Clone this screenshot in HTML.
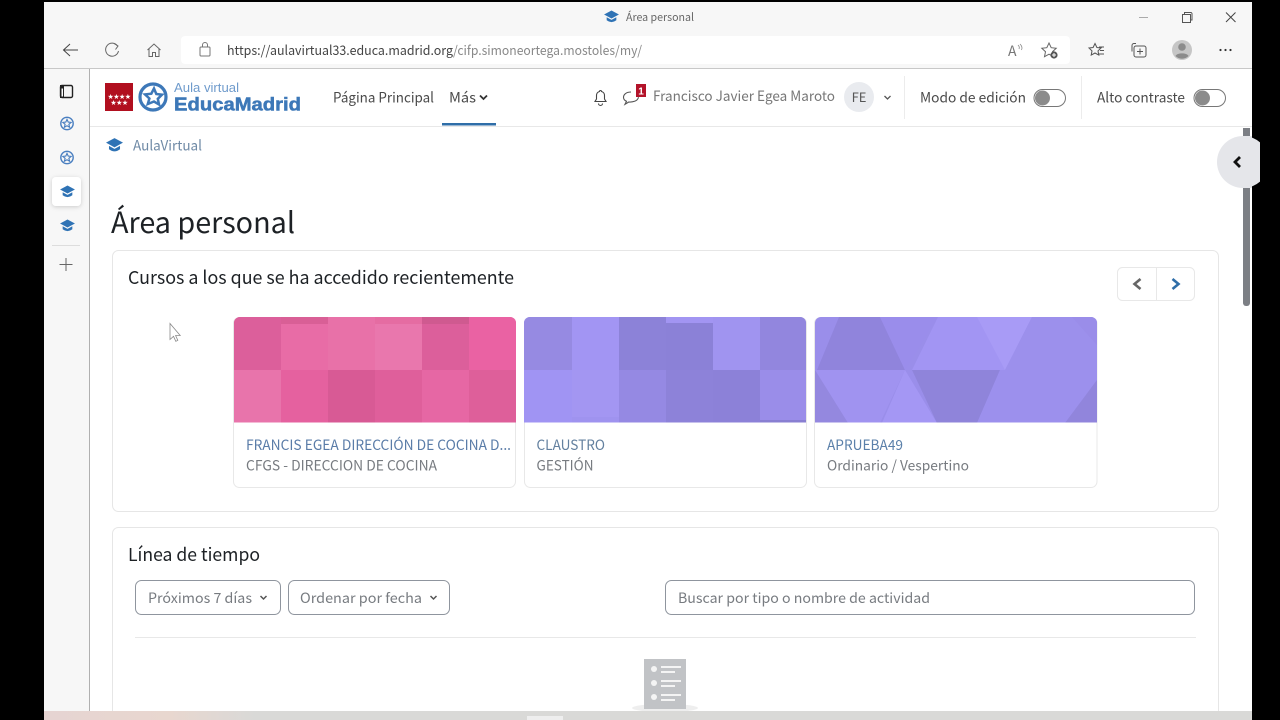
<!DOCTYPE html>
<html lang="es">
<head>
<meta charset="utf-8">
<title>Área personal</title>
<style>
html,body{margin:0;padding:0;width:1280px;height:720px;overflow:hidden;background:#000}
svg{display:block}
text{font-family:"Noto Sans CJK SC","Liberation Sans",sans-serif}
.lib{font-family:"Liberation Sans",sans-serif}
</style>
</head>
<body>
<svg width="1280" height="720" viewBox="0 0 1280 720" xmlns="http://www.w3.org/2000/svg">
<defs>
<symbol id="cap" viewBox="0 0 16 14">
  <path d="M8 .5 L16 4.800 L8 9.200 L0 4.800 Z" fill="#2f73b5"/>
  <path d="M2.800 7.800 L8 10.600 L13.200 7.800 L13.200 11 Q8 15 2.800 11 Z" fill="#2f73b5"/>
</symbol>
<symbol id="star" viewBox="0 0 16 16">
  <circle cx="8" cy="8" r="6.600" fill="none" stroke="#4a7fc0" stroke-width="1.500"/>
  <path d="M8 3.600 L9.300 6.500 L12.400 6.800 L10 8.900 L10.800 12 L8 10.400 L5.200 12 L6 8.900 L3.600 6.800 L6.700 6.500 Z" fill="none" stroke="#4a7fc0" stroke-width="1.200"/>
</symbol>
<filter id="sh" x="-30%" y="-30%" width="160%" height="160%"><feDropShadow dx="0" dy="1" stdDeviation="2" flood-color="#000" flood-opacity=".18"/></filter>
<filter id="shd" x="-30%" y="-30%" width="160%" height="160%"><feMorphology operator="dilate" radius=".25"/></filter>
</defs>

<!-- frame -->
<rect width="1280" height="720" fill="#000"/>
<rect x="44" y="2" width="1208" height="718" fill="#f7f7f7"/>

<!-- title bar -->
<use href="#cap" x="604" y="10" width="15" height="13"/>
<text x="626" y="21" font-size="11" fill="#666" textLength="68" lengthAdjust="spacingAndGlyphs">Área personal</text>
<path d="M1139 17.500h9" stroke="#aaa" stroke-width="1"/>
<path d="M1182.500 14.500h8v8h-8z" fill="none" stroke="#555" stroke-width="1"/>
<path d="M1184.500 14.500v-2h6.500a1.500 1.500 0 0 1 1 1v6.500h-2" fill="none" stroke="#555" stroke-width="1"/>
<path d="M1226 12.500l9.500 9.500M1235.500 12.500l-9.500 9.500" stroke="#444" stroke-width="1"/>

<!-- toolbar -->
<path d="M78 50H64M70 44l-6.500 6 6.500 6" fill="none" stroke="#444" stroke-width="1"/>
<path d="M117.500 46a6.500 6.500 0 1 0 1 5" fill="none" stroke="#666" stroke-width="1"/>
<path d="M114 43.500l4 2.500-2.500 3.500" fill="none" stroke="#666" stroke-width="1"/>
<path d="M147.500 50l6.500-6 6.500 6M149 49v7.500h3.500v-4h3v4h3.500V49" fill="none" stroke="#666" stroke-width="1"/>
<rect x="181" y="36" width="889" height="28" rx="4" fill="#fff"/>
<rect x="200" y="47" width="10" height="9" rx="1" fill="none" stroke="#777" stroke-width="1"/>
<path d="M202.500 47v-2a2.500 2.500 0 0 1 5 0v2" fill="none" stroke="#777" stroke-width="1"/>
<text x="227" y="55" font-size="13" fill="#444" textLength="226" lengthAdjust="spacingAndGlyphs">https://aulavirtual33.educa.madrid.org</text>
<text x="453" y="55" font-size="13" fill="#888" textLength="189" lengthAdjust="spacingAndGlyphs">/cifp.simoneortega.mostoles/my/</text>
<text x="1008" y="56" font-size="14" fill="#777">A</text>
<path d="M1018 45q2 2 1 4M1020 44q3 3 1.500 6" fill="none" stroke="#888" stroke-width=".8"/>
<path d="M1049 43l2.200 4.700 5 .6-3.700 3.400 1 5-4.500-2.500-4.500 2.500 1-5-3.700-3.400 5-.6z" fill="none" stroke="#666" stroke-width="1"/>
<circle cx="1054" cy="55" r="3.600" fill="#555"/>
<path d="M1052 55h4M1054 53v4" stroke="#fff" stroke-width="1"/>
<path d="M1095 43.500l1.900 4 4.100.5-3 2.900.8 4.200-3.800-2.100-3.800 2.100.8-4.200-3-2.900 4.100-.5z" fill="none" stroke="#555" stroke-width="1"/>
<path d="M1099 47h5M1100 50.500h4M1099 54h5" stroke="#555" stroke-width="1"/>
<rect x="1134" y="46" width="12" height="11" rx="2" fill="none" stroke="#555" stroke-width="1"/>
<path d="M1136 43.500h-2a2 2 0 0 0-2 2v6M1140 48.500v6M1137 51.500h6" fill="none" stroke="#555" stroke-width="1"/>
<circle cx="1182" cy="50" r="10" fill="#c6c6c6"/>
<circle cx="1182" cy="47" r="3.800" fill="#8b8b8b"/>
<path d="M1175.500 56c1.500-3.500 11.500-3.500 13 0a9 9 0 0 1-13 0z" fill="#8b8b8b"/>
<circle cx="1220.500" cy="50" r="1.100" fill="#333"/><circle cx="1225.500" cy="50" r="1.100" fill="#333"/><circle cx="1230.500" cy="50" r="1.100" fill="#333"/>
<path d="M44 68.500h1208" stroke="#c8c8c8" stroke-width="1"/>

<!-- side bar -->
<rect x="44" y="69" width="45" height="651" fill="#f7f7f7"/>
<path d="M89.500 69v643" stroke="#b0b0b0" stroke-width="1"/>
<rect x="60.500" y="85.500" width="12" height="12" rx="1.500" fill="none" stroke="#222" stroke-width="1.400"/>
<rect x="60" y="85" width="4" height="13" fill="#222"/>
<rect x="61.500" y="88.500" width="1.500" height="8" fill="#fff"/>
<use href="#star" x="59.500" y="116" width="15" height="15"/>
<use href="#star" x="59.500" y="150" width="15" height="15"/>
<rect x="52" y="177" width="29" height="29" rx="4" fill="#fff" filter="url(#sh)"/>
<use href="#cap" x="60" y="185" width="15" height="13"/>
<use href="#cap" x="60" y="219" width="15" height="13"/>
<path d="M52 245.500h28" stroke="#ddd" stroke-width="1"/>
<path d="M59.500 264.500h13M66 258v13" stroke="#666" stroke-width="1"/>

<!-- content -->
<rect x="90" y="69" width="1162" height="643" fill="#fff"/>
<path d="M90 126.500h1162" stroke="#e8e8e8" stroke-width="1"/>

<!-- logo -->
<rect x="105" y="83" width="28" height="28" fill="#b10f1f"/>
<text x="119" y="99" font-size="7" fill="#fff" text-anchor="middle" class="lib" letter-spacing="-.5">★★★★</text>
<text x="119" y="105" font-size="7" fill="#fff" text-anchor="middle" class="lib" letter-spacing="-.5">★★★</text>
<circle cx="153" cy="97" r="13" fill="none" stroke="#3d78b8" stroke-width="3.200"/>
<path d="M154 88.500l2.300 5.500 5.700.7-4.200 4.100 1.200 5.700-5-3-6.200 2.500 1.600-5.500-4.400-4.100 6.300-.7z" fill="none" stroke="#3d78b8" stroke-width="2.500"/>
<text x="174" y="92" font-size="13" fill="#6f9bcc" class="lib" textLength="65" lengthAdjust="spacingAndGlyphs">Aula virtual</text>
<text x="174" y="110.500" font-size="18" font-weight="700" fill="#3d78b8" stroke="#3d78b8" stroke-width=".5" class="lib" textLength="127" lengthAdjust="spacingAndGlyphs">EducaMadrid</text>

<!-- nav -->
<text x="333" y="102.500" font-size="14" fill="#4a4a4a" textLength="101" lengthAdjust="spacingAndGlyphs">Página Principal</text>
<text x="449" y="102.500" font-size="14" fill="#4a4a4a" textLength="27" lengthAdjust="spacingAndGlyphs">Más</text>
<path d="M480 95.500l3.500 3.500 3.500-3.500" fill="none" stroke="#333" stroke-width="1.800"/>
<rect x="442" y="123" width="54" height="2.500" fill="#2f6ea8"/>

<path d="M600.500 90.500a1 1 0 0 1 1 1 4 4 0 0 1 3 4v3.500l1.500 2.500h-11l1.500-2.500V95.500a4 4 0 0 1 3-4 1 1 0 0 1 1-1z" fill="none" stroke="#444" stroke-width="1.100"/>
<path d="M598.500 103.500a2 2 0 0 0 4 0" fill="none" stroke="#444" stroke-width="1.100"/>
<path d="M631 92c-4.500 0-7.500 2.300-7.500 5.200 0 1.800 1.200 3.300 3 4.100l-1.500 3 3.800-2.300c3 .3 9-.6 9.700-4.800" fill="none" stroke="#555" stroke-width="1.100"/>
<rect x="636" y="84" width="10" height="13" fill="#b3132a"/>
<text x="641" y="94.500" font-size="10" font-weight="700" fill="#fff" text-anchor="middle" class="lib">1</text>
<text x="653" y="101" font-size="14" fill="#777" textLength="182" lengthAdjust="spacingAndGlyphs">Francisco Javier Egea Maroto</text>
<circle cx="859" cy="97" r="15" fill="#e9ebef"/>
<text x="859" y="102" font-size="13" fill="#555" text-anchor="middle">FE</text>
<path d="M884.500 96l3 3 3-3" fill="none" stroke="#555" stroke-width="1.300"/>
<path d="M904.500 76v43M1081.500 76v43" stroke="#ececec" stroke-width="1"/>
<text x="920" y="102.500" font-size="14" fill="#4a4a4a" textLength="106" lengthAdjust="spacingAndGlyphs">Modo de edición</text>
<rect x="1034" y="89.500" width="31.500" height="17" rx="8.500" fill="#fff" stroke="#777" stroke-width="1"/>
<circle cx="1042.500" cy="98" r="7.500" fill="#8b8b8b"/>
<text x="1097" y="102.500" font-size="14" fill="#4a4a4a" textLength="88" lengthAdjust="spacingAndGlyphs">Alto contraste</text>
<rect x="1194" y="89.500" width="31.500" height="17" rx="8.500" fill="#fff" stroke="#777" stroke-width="1"/>
<circle cx="1202.500" cy="98" r="7.500" fill="#8b8b8b"/>

<!-- breadcrumb -->
<use href="#cap" x="106" y="137.500" width="17" height="15"/>
<text x="133" y="150.500" font-size="14" fill="#6f8aa6" textLength="69" lengthAdjust="spacingAndGlyphs">AulaVirtual</text>

<!-- scrollbar & drawer -->
<rect x="1243" y="128" width="7" height="178" rx="3" fill="#7c7f85"/>
<circle cx="1243" cy="162" r="26" fill="#e5e6ea" clip-path="inset(0 9px 0 0)"/>
<rect x="1243" y="136" width="9" height="52" fill="#e5e6ea"/>
<rect x="1243" y="128" width="7" height="8" fill="#7c7f85"/>
<path d="M1240 157l-5 5 5 5" fill="none" stroke="#111" stroke-width="2.800"/>

<!-- heading -->
<text x="111" y="233" font-size="29" fill="#1d2125" textLength="184" lengthAdjust="spacingAndGlyphs">Área personal</text>

<!-- recent card -->
<rect x="112.500" y="250.500" width="1106" height="261" rx="6" fill="#fff" stroke="#e6e6e6"/>
<text x="128" y="284" font-size="18" fill="#1d2125" textLength="386" lengthAdjust="spacingAndGlyphs">Cursos a los que se ha accedido recientemente</text>
<rect x="1117.500" y="267.500" width="77" height="33" rx="5" fill="#fff" stroke="#e8e8e8"/>
<path d="M1156.500 268v32" stroke="#e8e8e8"/>
<path d="M1140.500 279l-6 5 6 5" fill="none" stroke="#666" stroke-width="2.600"/>
<path d="M1172.500 279l6 5-6 5" fill="none" stroke="#2f6ea8" stroke-width="2.600"/>

<!-- cursor -->
<path d="M170 323.500v16l3.500-3.200 2.300 5 2-1-2.200-4.800h4.600z" fill="#fff" stroke="#8a8a8a" stroke-width=".8"/>

<!-- course 1 -->
<rect x="233.500" y="317.500" width="282" height="170" rx="6" fill="#fff" stroke="#e8e8e8"/>
<clipPath id="c1"><path d="M234 323a6 6 0 0 1 6-6h270a6 6 0 0 1 6 6v99.500H234z"/></clipPath>
<g clip-path="url(#c1)">
<rect x="234" y="317" width="282" height="106" fill="#e364a0"/>
<rect x="234" y="317" width="47" height="53" fill="#dc5f9b"/>
<rect x="281" y="317" width="47" height="7" fill="#d95f96"/>
<rect x="281" y="324" width="47" height="46" fill="#e86ca6"/>
<rect x="328" y="317" width="47" height="53" fill="#e871a8"/>
<rect x="375" y="317" width="47" height="7" fill="#e56ca2"/>
<rect x="375" y="324" width="47" height="46" fill="#e977ad"/>
<rect x="422" y="317" width="47" height="7" fill="#cf5a90"/>
<rect x="422" y="324" width="47" height="46" fill="#dc5f9b"/>
<rect x="469" y="317" width="47" height="53" fill="#ea62a3"/>
<rect x="234" y="370" width="47" height="53" fill="#e874ab"/>
<rect x="281" y="370" width="47" height="53" fill="#e5619f"/>
<rect x="328" y="370" width="47" height="53" fill="#d85a95"/>
<rect x="375" y="370" width="47" height="53" fill="#df5f9b"/>
<rect x="422" y="370" width="47" height="53" fill="#e667a4"/>
<rect x="469" y="370" width="47" height="53" fill="#de5f9a"/>
</g>
<text x="246" y="450" font-size="14" fill="#5a7ca8" textLength="265" lengthAdjust="spacingAndGlyphs">FRANCIS EGEA DIRECCIÓN DE COCINA D...</text>
<text x="246" y="470.500" font-size="14" fill="#777b80" textLength="191" lengthAdjust="spacingAndGlyphs">CFGS - DIRECCION DE COCINA</text>

<!-- course 2 -->
<rect x="524.500" y="317.500" width="282" height="170" rx="6" fill="#fff" stroke="#e8e8e8"/>
<clipPath id="c2"><path d="M524 323a6 6 0 0 1 6-6h270a6 6 0 0 1 6 6v99.500H524z"/></clipPath>
<g clip-path="url(#c2)">
<rect x="524" y="317" width="283" height="106" fill="#968be4"/>
<rect x="524" y="317" width="48" height="53" fill="#968ae2"/>
<rect x="572" y="317" width="47" height="53" fill="#a295f3"/>
<rect x="619" y="317" width="47" height="53" fill="#8c82d8"/>
<rect x="666" y="317" width="47" height="6" fill="#a295f2"/>
<rect x="666" y="323" width="47" height="47" fill="#8b81d7"/>
<rect x="713" y="317" width="47" height="53" fill="#a094f0"/>
<rect x="760" y="317" width="47" height="53" fill="#9286de"/>
<rect x="524" y="370" width="48" height="53" fill="#a094f3"/>
<rect x="572" y="370" width="47" height="47" fill="#a396f2"/>
<rect x="572" y="417" width="47" height="6" fill="#9f93ef"/>
<rect x="619" y="370" width="47" height="53" fill="#9589e3"/>
<rect x="666" y="370" width="47" height="53" fill="#8d82d9"/>
<rect x="713" y="370" width="47" height="53" fill="#8c81d8"/>
<rect x="760" y="370" width="47" height="53" fill="#9a8de9"/>
<rect x="760" y="420" width="47" height="3" fill="#897fd2"/>
</g>
<text x="536.500" y="450" font-size="14" fill="#63809f" textLength="68.500" lengthAdjust="spacingAndGlyphs">CLAUSTRO</text>
<text x="536.500" y="470.500" font-size="14" fill="#777b80" textLength="57" lengthAdjust="spacingAndGlyphs">GESTIÓN</text>

<!-- course 3 -->
<rect x="814.500" y="317.500" width="282.500" height="170" rx="6" fill="#fff" stroke="#e8e8e8"/>
<clipPath id="c3"><path d="M815 323a6 6 0 0 1 6-6h270a6 6 0 0 1 6 6v99.500H815z"/></clipPath>
<g clip-path="url(#c3)">
<rect x="815" y="317" width="282" height="106" fill="#9a8eea"/>
<path d="M817 370L839 317H880L905 370Z" fill="#9084dc"/>
<path d="M880 317H938L905 370Z" fill="#9a8deb"/>
<path d="M912 370L938 317H1032L1005 370Z" fill="#a295f3"/>
<path d="M977 317H1032L1005 370Z" fill="#a89bf6"/>
<path d="M1005 370L1032 317H1072L1097 345V370Z" fill="#9c90ec"/>
<path d="M1072 317H1097V345Z" fill="#9a8de9"/>
<path d="M815 370H905L880 423H848Z" fill="#a093f0"/>
<path d="M815 370L848 423H815Z" fill="#9488df"/>
<path d="M905 370L937 423H882Z" fill="#a497f4"/>
<path d="M912 370H1000L977 423H937Z" fill="#8f84da"/>
<path d="M1000 370H1097V380L1065 423H977Z" fill="#9c90ed"/>
<path d="M1097 380V423H1065Z" fill="#9185dc"/>
</g>
<text x="827" y="450" font-size="14" fill="#5b80aa" textLength="76" lengthAdjust="spacingAndGlyphs">APRUEBA49</text>
<text x="827" y="470.500" font-size="14" fill="#777b80" textLength="142" lengthAdjust="spacingAndGlyphs">Ordinario / Vespertino</text>

<!-- timeline -->
<rect x="112.500" y="527.500" width="1106" height="200" rx="6" fill="#fff" stroke="#e6e6e6"/>
<text x="128" y="561" font-size="18" fill="#1d2125" textLength="132" lengthAdjust="spacingAndGlyphs">Línea de tiempo</text>
<rect x="135.500" y="580.500" width="145" height="34" rx="6" fill="#fff" stroke="#8f959e"/>
<text x="148" y="603" font-size="14" fill="#777b80" textLength="104" lengthAdjust="spacingAndGlyphs">Próximos 7 días</text>
<path d="M260.500 596l3 3 3-3" fill="none" stroke="#555" stroke-width="1.500"/>
<rect x="288.500" y="580.500" width="161" height="34" rx="6" fill="#fff" stroke="#8f959e"/>
<text x="300" y="603" font-size="14" fill="#777b80" textLength="122" lengthAdjust="spacingAndGlyphs">Ordenar por fecha</text>
<path d="M430.500 596l3 3 3-3" fill="none" stroke="#555" stroke-width="1.500"/>
<rect x="665.500" y="580.500" width="529" height="34" rx="6" fill="#fff" stroke="#8f959e"/>
<text x="678" y="603" font-size="14" fill="#777b80" textLength="252" lengthAdjust="spacingAndGlyphs">Buscar por tipo o nombre de actividad</text>
<path d="M135 637.500h1061" stroke="#e8e8e8"/>

<!-- empty state icon -->
<ellipse cx="665" cy="708" rx="33" ry="4" fill="#eee"/>
<rect x="644" y="659" width="42" height="50" fill="#c1c3c6"/>
<g fill="#f4f4f4">
<circle cx="654" cy="669" r="3"/><circle cx="654" cy="683" r="3"/><circle cx="654" cy="697" r="3"/>
<rect x="661" y="666" width="20" height="2"/><rect x="661" y="671" width="14" height="2"/>
<rect x="661" y="680" width="20" height="2"/><rect x="661" y="685" width="14" height="2"/>
<rect x="661" y="694" width="20" height="2"/><rect x="661" y="699" width="14" height="2"/>
</g>

<!-- bottom strip -->
<linearGradient id="bs" x1="0" x2="1" y1="0" y2="0">
<stop offset="0" stop-color="#e6d4d2"/><stop offset=".6" stop-color="#e8d7cf"/><stop offset="1" stop-color="#d9d9d7"/>
</linearGradient>
<rect x="44" y="711" width="1208" height="9" fill="#d9d9d7"/>
<rect x="44" y="711" width="210" height="9" fill="url(#bs)"/>
<rect x="527" y="716" width="36" height="4" fill="#eeeeee"/>
</svg>
</body>
</html>
